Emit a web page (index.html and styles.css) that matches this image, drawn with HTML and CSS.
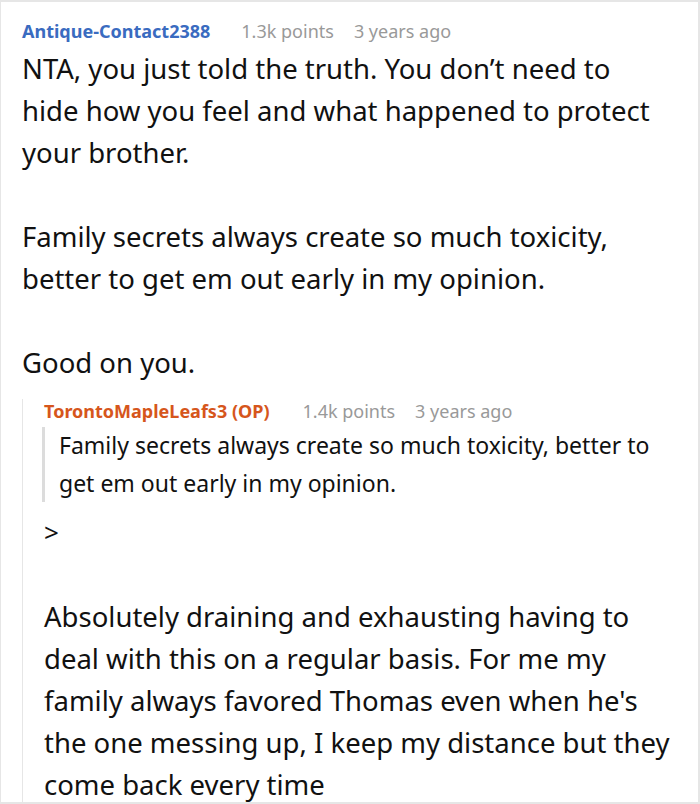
FILE: index.html
```html
<!DOCTYPE html>
<html>
<head>
<meta charset="utf-8">
<link rel="stylesheet" href="styles.css">
</head>
<body>
<div class="frame">
  <div class="comment">
    <div class="meta">
      <span class="author">Antique-Contact2388</span>
      <span class="info">1.3k points</span>
      <span class="info">3 years ago</span>
    </div>
    <div class="body top-body">
      <p>NTA, you just told the truth. You don’t need to hide how you feel and what happened to protect your brother.</p>
      <p>Family secrets always create so much toxicity, better to get em out early in my opinion.</p>
      <p>Good on you.</p>
    </div>
    <div class="reply">
      <div class="meta">
        <span class="author op">TorontoMapleLeafs3 (OP)</span>
        <span class="info">1.4k points</span>
        <span class="info">3 years ago</span>
      </div>
      <blockquote class="quote">Family secrets always create so much toxicity, better to get em out early in my opinion.</blockquote>
      <p class="gt">&gt;</p>
      <div class="body">
        <p>Absolutely draining and exhausting having to deal with this on a regular basis. For me my family always favored Thomas even when he's the one messing up, I keep my distance but they come back every time</p>
      </div>
    </div>
  </div>
</div>
</body>
</html>
```
FILE: styles.css
```css
html, body {
  margin: 0;
  padding: 0;
  background: #fff;
}
.frame {
  box-sizing: border-box;
  width: 700px;
  height: 804px;
  overflow: hidden;
  border: 2px solid #e6e6e6;
  border-left-width: 1px;
  font-family: "Noto Sans", sans-serif;
  color: #111;
}
.comment {
  padding: 17px 24px 0 21px;
}
.meta {
  display: flex;
  align-items: baseline;
  font-size: 18px;
  line-height: 24px;
  color: #999;
}
.author {
  color: #3a6bc0;
  font-weight: 700;
  margin-right: 31px;
}
.author.op {
  color: #d6561c;
  margin-right: 33px;
}
.info {
  margin-right: 20px;
}
.body {
  margin-top: 5px;
}
.top-body {
  margin-right: 14px;
}
.body p {
  margin: 0 0 42px 0;
  font-size: 27.5px;
  line-height: 42px;
}
.body p:last-child {
  margin-bottom: 0;
}
.reply {
  border-left: 1px solid #e6e6e6;
  margin-top: 26px;
  padding-left: 21px;
}
.reply .meta {
  margin-top: -11px;
}
.quote {
  margin: 4px 0 0 -2px;
  border-left: 3px solid #dcdcdc;
  padding-left: 14px;
  font-size: 23px;
  line-height: 37.5px;
}
.gt {
  margin: 14px 0 0 0;
  font-size: 26px;
  line-height: 32px;
}
.reply .body {
  margin-top: 48px;
}
```
